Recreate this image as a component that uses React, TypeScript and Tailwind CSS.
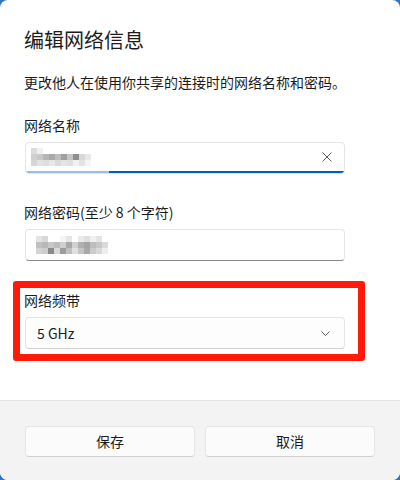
import React from "react";

const grid1: string[][] = [
  ["#dcdcdc", "#f0f0f0", "#ffffff", "#ffffff", "#ffffff", "#ffffff", "#ffffff", "#ffffff", "#ffffff", "#ffffff"],
  ["#cfcfcf", "#c8c8c8", "#b5b5b5", "#a8a8a8", "#bdbdbd", "#a0a0a0", "#c4c4c4", "#8f8f8f", "#d8d8d8", "#e8e8e8"],
  ["#d6d6d6", "#e2e2e2", "#dedede", "#e6e6e6", "#dadada", "#e4e4e4", "#e0e0e0", "#f0f0f0", "#e2e2e2", "#f4f4f4"],
];

const grid2: string[][] = [
  ["#e4e4e4", "#d8d8d8", "#ffffff", "#ffffff", "#f4f4f4", "#e6e6e6", "#ffffff", "#eaeaea", "#e0e0e0", "#f0f0f0", "#e4e4e4", "#ffffff"],
  ["#c0c0c0", "#b8b8b8", "#c8c8c8", "#bcbcbc", "#cfcfcf", "#a8a8a8", "#d0d0d0", "#b0b0b0", "#a4a4a4", "#bdbdbd", "#c8c8c8", "#dadada"],
  ["#d4d4d4", "#cdcdcd", "#8a8a8a", "#d8d8d8", "#9c9c9c", "#bfbfbf", "#e0e0e0", "#c4c4c4", "#a8a8a8", "#cccccc", "#d8d8d8", "#eeeeee"],
];

function Pixels({ grid }: { grid: string[][] }) {
  return (
    <div className="flex flex-col">
      {grid.map((row, r) => (
        <div key={r} className="flex">
          {row.map((c, i) => (
            <div key={i} className="w-[6px] h-[6px]" style={{ backgroundColor: c }} />
          ))}
        </div>
      ))}
    </div>
  );
}

export default function App() {
  return (
    <div className="w-[400px] h-[480px] bg-[#2f74c0] font-['Noto_Sans_CJK_SC','Noto_Sans',sans-serif] text-[#1b1b1b]">
      <div className="w-full h-full bg-white rounded-[8px] overflow-hidden flex flex-col">
        <div className="flex-1 px-6 pt-[26px] flex flex-col">
          <h1 className="text-[20px] leading-[28px] font-normal">编辑网络信息</h1>
          <p className="mt-[18px] text-[14px] leading-[20px]">更改他人在使用你共享的连接时的网络名称和密码。</p>

          <div className="mt-[23px] text-[14px] leading-[20px]">网络名称</div>
          <div className="mt-[7px] ml-px w-[320px] h-[32px] relative bg-white border border-[#e5e5e5] rounded-[4px] overflow-hidden flex items-center">
            <div className="pl-[5px] -mt-[2px]">
              <Pixels grid={grid1} />
            </div>
            <div className="ml-auto mr-[12px] -mt-[2px]">
              <svg width="10" height="10" viewBox="0 0 10 10">
                <path d="M0.5 0.5 L9.5 9.5 M9.5 0.5 L0.5 9.5" stroke="#5c5c5c" strokeWidth="1" fill="none" />
              </svg>
            </div>
            <div className="absolute left-0 right-0 bottom-0 h-[2px] flex">
              <div className="w-[83px] bg-[#9dbddd]" />
              <div className="flex-1 bg-[#005fb8]" />
            </div>
          </div>

          <div className="mt-[28px] text-[14px] leading-[20px]">网络密码(至少 8 个字符)</div>
          <div className="mt-[7px] ml-px w-[320px] h-[32px] bg-white border border-[#e5e5e5] border-b-[#8a8a8a] rounded-[4px] flex items-center">
            <div className="pl-[10px]">
              <Pixels grid={grid2} />
            </div>
          </div>

          <div className="relative mt-[29px]">
            <div className="text-[14px] leading-[20px]">网络频带</div>
            <div className="mt-[7px] ml-px w-[320px] h-[32px] bg-[#fdfdfd] border border-[#e5e5e5] border-b-[#d0d0d0] rounded-[4px] flex items-center px-[11px]">
              <span className="text-[14px]">5 GHz</span>
              <svg className="ml-auto mr-[3px]" width="9" height="5" viewBox="0 0 9 5">
                <path d="M0.5 0.5 L4.5 4.5 L8.5 0.5" stroke="#5c5c5c" strokeWidth="1" fill="none" />
              </svg>
            </div>
            <div className="absolute left-[-11px] top-[-9px] w-[352px] h-[80px] border-[7px] border-[#ff1a0a] rounded-[3px] pointer-events-none" />
          </div>
        </div>

        <div className="h-[80px] bg-[#f3f3f3] border-t border-[#e5e5e5] px-[25px] pt-[25px] flex gap-[10px]">
          <button className="flex-1 h-[31px] bg-[#fbfbfb] border border-[#e5e5e5] border-b-[#d0d0d0] rounded-[4px] text-[14px] text-[#1b1b1b]">保存</button>
          <button className="flex-1 h-[31px] bg-[#fbfbfb] border border-[#e5e5e5] border-b-[#d0d0d0] rounded-[4px] text-[14px] text-[#1b1b1b]">取消</button>
        </div>
      </div>
    </div>
  );
}
